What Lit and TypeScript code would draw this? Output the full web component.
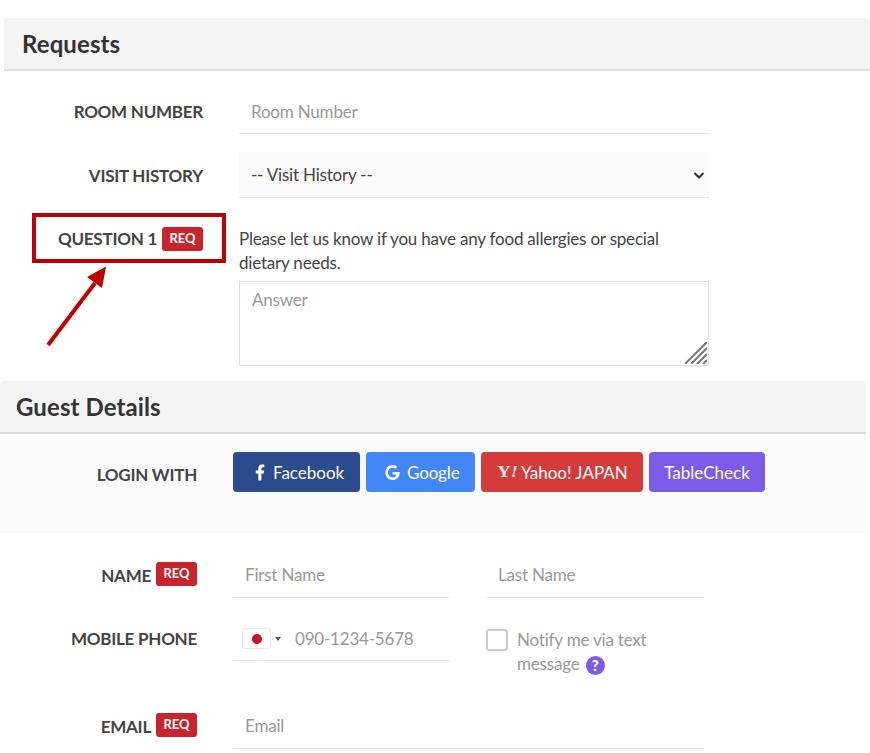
import { LitElement, html, css } from "lit";
import { customElement } from "lit/decorators.js";

@customElement("app-root")
export class AppRoot extends LitElement {
  static styles = css`
    :host { display: block; position: relative; height: 753px; overflow: hidden; background: #fff; font-family: Lato, sans-serif; color: #444; font-size: 17px; letter-spacing: -0.2px; }
    * { box-sizing: border-box; }
    .requests { padding: 18px 0 0 4px; }
    .head { height: 53px; background: #f4f4f4; border-bottom: 2px solid #ddd; border-radius: 4px 4px 0 0; padding-left: 18px; font-size: 24px; font-weight: 700; color: #333; line-height: 52px; letter-spacing: 0.1px; }
    .guest .head { padding-left: 16px; }
    .guest { width: 866px; margin-top: 15px; }
    .rows { display: flex; flex-direction: column; }
    .row { display: flex; gap: 36px; }
    .label { width: 199px; flex: none; display: flex; justify-content: flex-end; align-items: center; gap: 5px; font-weight: 700; font-size: 17px; color: #444; height: 44px; letter-spacing: -0.25px; }
    .guest .label { width: 197px; }
    .gform .label { padding-bottom: 2px; }
    .gform .label .badge { margin-top: -2px; }
    .field { width: 470px; flex: none; position: relative; }
    .badge { background: #c9242b; color: #fff; font-size: 13px; letter-spacing: -0.1px; font-weight: 700; border-radius: 3px; height: 24px; width: 41px; display: flex; align-items: center; justify-content: center; padding-bottom: 2px; }
    input[type="text"], select, textarea { display: block; width: 100%; font: inherit; letter-spacing: inherit; color: #444; border: none; outline: none; background: #fff; }
    input[type="text"] { height: 44px; padding: 0 12px; border-bottom: 1px solid #e4e4e4; }
    .gform input[type="text"] { padding-bottom: 2px; }
    ::placeholder { color: #999; opacity: 1; }
    select { height: 46px; padding: 0 12px; appearance: none; background: #fafafa; border-bottom: 1px solid #e4e4e4; }
    .chev { position: absolute; right: 4px; top: 17px; width: 12px; height: 12px; fill: none; stroke: #333; stroke-width: 2; pointer-events: none; }
    .r1 { margin-top: 19px; }
    .r1 .label { padding-bottom: 2px; }
    .r2 { margin-top: 18px; }
    .r2 .label { height: 46px; }
    .r3 { margin-top: 29px; }
    .r3 .label { height: 24px; }
    .r3 .label .txt { margin-top: -2px; }
    .r3 .field { line-height: 24px; }
    textarea { height: 85px; margin-top: 6px; border: 1px solid #e2e2e2; padding: 6px 12px; resize: none; line-height: 24px; }
    .grip { position: absolute; right: 2px; bottom: 2px; width: 22px; height: 22px; stroke: #777; stroke-width: 2; fill: none; }
    .band { height: 99px; background: #fafafa; padding-top: 18px; }
    .band .label { height: 40px; padding-top: 5px; }
    .btns { display: flex; gap: 6px; }
    .btn { height: 40px; border-radius: 4px; color: #fff; font-size: 17px; letter-spacing: 0; display: flex; align-items: center; }
    .fb { background: #2a4b8d; width: 127px; padding-left: 22px; gap: 8px; }
    .gg { background: #4285f4; width: 109px; padding-left: 19px; gap: 7px; letter-spacing: -0.15px; }
    .yh { background: #d63b3b; width: 162px; padding-left: 16px; }
    .tc { background: #7b5ce8; width: 116px; justify-content: center; }
    .ylogo { font-family: "Liberation Serif", serif; font-weight: 700; font-size: 16px; letter-spacing: -0.3px; display: inline-block; width: 24px; transform-origin: left center; transform: scaleX(1.2); color: #fbe9e9; }
    .gform { display: flex; flex-direction: column; }
    .g1 { margin-top: 21px; }
    .g2 { margin-top: 19px; }
    .pair { display: flex; gap: 36px; width: 471px; }
    .cell { width: 217px; flex: none; }
    input[type="text"].cell { width: 217px; }
    input[type="text"].cell + .cell { width: 218px; }
    .g3 .field { width: 471px; }
    .phone { display: flex; align-items: center; height: 44px; border-bottom: 1px solid #e4e4e4; color: #999; }
    .flag { margin-left: 10px; width: 27px; height: 19px; border-radius: 2px; background: #fff; box-shadow: 0 0 2px rgba(0,0,0,.35); display: flex; align-items: center; justify-content: center; }
    .flag i { width: 10px; height: 10px; border-radius: 50%; background: #c8102e; display: block; }
    .caret { margin-left: 5px; width: 0; height: 0; border-left: 3px solid transparent; border-right: 3px solid transparent; border-top: 4px solid #555; }
    .gform input[type="text"].tel { border: none; height: 42px; padding: 0 0 0 14px; width: 160px; }
    .notify { display: flex; gap: 9px; height: 88px; padding-top: 11px; color: #999; line-height: 24px; }
    .box { width: 22px; height: 22px; border: 2px solid #ccc; border-radius: 3px; flex: none; margin-top: 1px; }
    .q { display: inline-flex; width: 19px; height: 19px; line-height: 19px; border-radius: 50%; background: #7b5ce8; color: #fff; align-items: center; justify-content: center; font-weight: 900; font-size: 15px; margin-left: 2px; vertical-align: -1px; }
    .mark { position: absolute; left: 32px; top: 213px; width: 194px; height: 50px; border: 4px solid #c00000; pointer-events: none; }
    .arrow { position: absolute; left: 40px; top: 260px; width: 80px; height: 95px; }
  `;

  render() {
    return html`
      <section class="requests">
        <div class="head">Requests</div>
        <div class="rows">
          <div class="row r1">
            <div class="label">ROOM NUMBER</div>
            <div class="field"><input type="text" placeholder="Room Number" /></div>
          </div>
          <div class="row r2">
            <div class="label">VISIT HISTORY</div>
            <div class="field">
              <select><option>-- Visit History --</option></select>
              <svg class="chev" viewBox="0 0 12 12"><path d="M1.5 4l4.5 4.5L10.500 4" /></svg>
            </div>
          </div>
          <div class="row r3">
            <div class="label"><span class="txt">QUESTION 1</span> <span class="badge">REQ</span></div>
            <div class="field">
              Please let us know if you have any food allergies or special dietary needs.
              <textarea placeholder="Answer"></textarea>
              <svg class="grip" viewBox="0 0 22 22"><path d="M0 22L22 0M6 22L22 6M12 22L22 12M18 22L22 18" /></svg>
            </div>
          </div>
        </div>
      </section>
      <section class="guest">
        <div class="head">Guest Details</div>
        <div class="band">
          <div class="row">
            <div class="label">LOGIN WITH</div>
            <div class="btns">
              <div class="btn fb">
                <svg width="10" height="17" viewBox="0 0 320 512" fill="#fff"><path d="M279 288l14-93h-89v-60c0-25 12-50 52-50h41V7s-37-7-72-7C152 0 105 44 105 124v71H24v93h81v224h100V288z" /></svg>
                Facebook
              </div>
              <div class="btn gg">
                <svg width="15" height="15" viewBox="0 0 488 512" fill="#fff"><path d="M488 261c0 141-97 251-244 251C109 512 0 403 0 256S109 0 244 0c66 0 122 24 165 64l-67 64C254 43 90 107 90 256c0 92 74 167 154 167 93 0 128-67 133-101H244v-85h236c5 13 8 25 8 24z" /></svg>
                Google
              </div>
              <div class="btn yh"><span class="ylogo">Y<i>!</i></span>Yahoo! JAPAN</div>
              <div class="btn tc">TableCheck</div>
            </div>
          </div>
        </div>
        <div class="gform">
          <div class="row g1">
            <div class="label">NAME <span class="badge">REQ</span></div>
            <div class="field pair">
              <input class="cell" type="text" placeholder="First Name" />
              <input class="cell" type="text" placeholder="Last Name" />
            </div>
          </div>
          <div class="row g2">
            <div class="label">MOBILE PHONE</div>
            <div class="field pair">
              <div class="phone cell">
                <span class="flag"><i></i></span><span class="caret"></span>
                <input class="tel" type="text" placeholder="090-1234-5678" />
              </div>
              <div class="notify cell">
                <span class="box"></span>
                <span>Notify me via text message <span class="q">?</span></span>
              </div>
            </div>
          </div>
          <div class="row g3">
            <div class="label">EMAIL <span class="badge">REQ</span></div>
            <div class="field"><input type="text" placeholder="Email" /></div>
          </div>
        </div>
      </section>
      <div class="mark"></div>
      <svg class="arrow" viewBox="0 0 80 95">
        <path d="M8 85L55 23" stroke="#c00000" stroke-width="4" fill="none" />
        <path d="M66 6.500L47 17L62 28z" fill="#c00000" />
      </svg>
    `;
  }
}
